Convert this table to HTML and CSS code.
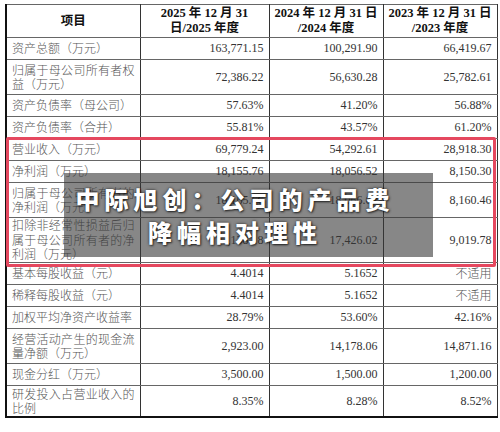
FILE: index.html
```html
<!DOCTYPE html>
<html lang="zh-CN">
<head>
    <meta charset="UTF-8">
    <meta name="viewport" content="width=device-width, initial-scale=1.0">
    <title>中际旭创 主要财务数据</title>
    <link rel="stylesheet" href="styles.css">
</head>
<body>
    <div class="sheet">
        <table class="fin">
            <colgroup>
                <col class="c-label">
                <col class="c-y1">
                <col class="c-y2">
                <col class="c-y3">
            </colgroup>
            <thead>
                <tr class="head">
                    <th>项目</th>
                    <th><span>2025 年 12 月 31</span><br><span>日/2025 年度</span></th>
                    <th><span>2024 年 12 月 31 日</span><br><span>/2024 年度</span></th>
                    <th><span>2023 年 12 月 31 日</span><br><span>/2023 年度</span></th>
                </tr>
            </thead>
            <tbody>
                <tr class="one">
                    <td class="label">资产总额（万元）</td>
                    <td>163,771.15</td><td>100,291.90</td><td>66,419.67</td>
                </tr>
                <tr class="two">
                    <td class="label">归属于母公司所有者权益（万元）</td>
                    <td>72,386.22</td><td>56,630.28</td><td>25,782.61</td>
                </tr>
                <tr class="one">
                    <td class="label">资产负债率（母公司）</td>
                    <td>57.63%</td><td>41.20%</td><td>56.88%</td>
                </tr>
                <tr class="one">
                    <td class="label">资产负债率（合并）</td>
                    <td>55.81%</td><td>43.57%</td><td>61.20%</td>
                </tr>
                <tr class="one">
                    <td class="label">营业收入（万元）</td>
                    <td>69,779.24</td><td>54,292.61</td><td>28,918.30</td>
                </tr>
                <tr class="one">
                    <td class="label">净利润（万元）</td>
                    <td>18,155.76</td><td>18,056.52</td><td>8,150.30</td>
                </tr>
                <tr class="two">
                    <td class="label">归属于母公司所有者的净利润（万元）</td>
                    <td>18,165.66</td><td>18,066.62</td><td>8,160.46</td>
                </tr>
                <tr class="three">
                    <td class="label">扣除非经常性损益后归属于母公司所有者的净利润（万元）</td>
                    <td>17,138.18</td><td>17,426.02</td><td>9,019.78</td>
                </tr>
                <tr class="one">
                    <td class="label">基本每股收益（元）</td>
                    <td>4.4014</td><td>5.1652</td><td class="cn">不适用</td>
                </tr>
                <tr class="one">
                    <td class="label">稀释每股收益（元）</td>
                    <td>4.4014</td><td>5.1652</td><td class="cn">不适用</td>
                </tr>
                <tr class="one">
                    <td class="label">加权平均净资产收益率</td>
                    <td>28.79%</td><td>53.60%</td><td>42.16%</td>
                </tr>
                <tr class="two">
                    <td class="label">经营活动产生的现金流量净额（万元）</td>
                    <td>2,923.00</td><td>14,178.06</td><td>14,871.16</td>
                </tr>
                <tr class="one">
                    <td class="label">现金分红（万元）</td>
                    <td>3,500.00</td><td>1,500.00</td><td>1,200.00</td>
                </tr>
                <tr class="two last">
                    <td class="label">研发投入占营业收入的比例</td>
                    <td>8.35%</td><td>8.28%</td><td>8.52%</td>
                </tr>
            </tbody>
        </table>

        <!-- 红色标注框 -->
        <div class="mark"></div>

        <!-- 标题浮层 -->
        <div class="caption">
            <p>中际旭创：公司的产品费<br>降幅相对理性</p>
        </div>
    </div>
</body>
</html>
```

FILE: styles.css
```css
body {
    margin: 0;
    background: #fff;
    font-family: "Liberation Serif", "Noto Sans CJK SC", serif;
}

.sheet {
    position: relative;
    width: 491px;
    margin: 4px 0 0 5px;
}

.fin {
    width: 491px;
    table-layout: fixed;
    border-collapse: collapse;
    border-top: 1px solid #444;
    border-left: 2px solid #111;
    border-bottom: 2px solid #111;
    border-right: 1px solid #999;
}

.c-label { width: 134px; }
.c-y1 { width: 129px; }
.c-y2 { width: 114px; }
.c-y3 { width: 114px; }

th, td {
    padding: 0 5px;
    border: 1px solid #333;
    border-top-color: #666;
    border-bottom-color: #666;
}

th {
    height: 32px;
    padding: 0 2px;
    font-size: 12.5px;
    line-height: 15px;
    font-weight: bold;
    color: #111;
    text-align: center;
}

th span {
    white-space: nowrap;
}

td {
    font-size: 12px;
    line-height: 14.5px;
    color: #333;
    text-align: right;
}

td.label {
    text-align: justify;
    font-family: "Noto Sans CJK SC", sans-serif;
    font-weight: 300;
    color: #555;
}

td.cn {
    font-family: "Noto Sans CJK SC", sans-serif;
    font-weight: 300;
    color: #555;
}

tr.one td { height: 21px; }
tr.two td { height: 34px; }
tr.three td { height: 44px; }
tr.last td { height: 30px; }

.mark {
    position: absolute;
    left: 1px;
    top: 133px;
    width: 484px;
    height: 124px;
    border: 3px solid #e5485f;
    border-radius: 2px;
}

.caption {
    position: absolute;
    left: 59px;
    top: 169px;
    width: 369px;
    height: 84px;
    background: rgba(55, 55, 55, 0.6);
    display: flex;
    align-items: center;
    justify-content: center;
}

.caption p {
    margin: 0;
    padding-right: 27px;
    text-align: center;
    font-family: "Noto Sans CJK SC", sans-serif;
    font-weight: 900;
    font-size: 24px;
    line-height: 33px;
    letter-spacing: 5px;
    color: #fff;
    text-shadow: 0 0 3px rgba(0, 0, 0, 0.7), 1px 1px 2px rgba(0, 0, 0, 0.6);
}
```
